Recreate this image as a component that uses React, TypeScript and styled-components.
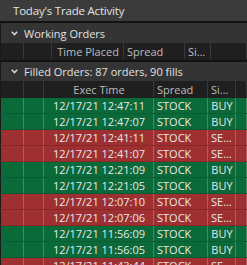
import React from 'react';
import styled, { createGlobalStyle } from 'styled-components';

const GlobalStyle = createGlobalStyle`
    html, body {
        margin: 0;
        padding: 0;
        background: #2b2b2b;
    }
    * {
        box-sizing: border-box;
    }
`;

const Panel = styled.div`
    width: 247px;
    height: 265px;
    overflow: hidden;
    background-color: #262626;
    font-family: "Open Sans", "Noto Sans", sans-serif;
    color: #dcdcdc;
`;
const TitleBar = styled.div`
    height: 23px;
    padding: 0 13px;
    display: flex;
    align-items: center;
    font-size: 11.5px;
    letter-spacing: -0.2px;
    color: #e2e2e2;
    background-color: #3b3b3b;
    border-bottom: 2px solid #121212;
`;
const SectionHeader = styled.div<{ height: number }>`
    height: ${(p) => p.height}px;
    display: flex;
    align-items: center;
    gap: 6px;
    padding-left: 10px;
    font-size: 11px;
    color: #e0e0e0;
    background-color: #343434;
    border-left: 1px solid #1a1a1a;
`;
const Chevron = styled.svg`
    width: 7px;
    height: 5px;
    flex: none;
`;
const Grid = styled.div<{ cols: string; bg: string; line: string; rowLine: string; height: number }>`
    display: grid;
    grid-template-columns: ${(p) => p.cols};
    height: ${(p) => p.height}px;
    background-color: ${(p) => p.bg};
    border-left: 1px solid #1a1a1a;
    border-bottom: 1px solid ${(p) => p.rowLine};
    & > div {
        border-right: 1px solid ${(p) => p.line};
    }
`;
const Cell = styled.div<{ align?: string }>`
    display: flex;
    align-items: center;
    justify-content: ${(p) => p.align || 'flex-start'};
    padding: 0 2px 0 3px;
    font-size: 11px;
    white-space: nowrap;
    overflow: hidden;
    color: #e8e8e8;
`;
const HeadCell = styled(Cell)`
    color: #bdbdbd;
`;
const Separator = styled.div`
    height: 2px;
    background-color: #121212;
`;

const WORKING_COLS = '23px 28px 72px 61px 26px 1fr';
const FILLED_COLS = '23px 20px 110px 54px 28px 1fr';

const fills = [
    { time: '12:47:11', side: 'BUY' },
    { time: '12:47:07', side: 'BUY' },
    { time: '12:41:11', side: 'SELL' },
    { time: '12:41:07', side: 'SELL' },
    { time: '12:21:09', side: 'BUY' },
    { time: '12:21:05', side: 'BUY' },
    { time: '12:07:10', side: 'SELL' },
    { time: '12:07:06', side: 'SELL' },
    { time: '11:56:09', side: 'BUY' },
    { time: '11:56:05', side: 'BUY' },
    { time: '11:43:44', side: 'SELL' },
];

const Down = () => (
    <Chevron viewBox="0 0 7 5">
        <path d="M0.8 0.8 L3.5 3.6 L6.2 0.8" fill="none" stroke="#d8d8d8" strokeWidth="1.5" />
    </Chevron>
);

const App = () => {
    return <Panel>
        <GlobalStyle />
        <TitleBar>Today's Trade Activity</TitleBar>
        <SectionHeader height={20}><Down />Working Orders</SectionHeader>
        <Grid cols={WORKING_COLS} bg="#1f1f1f" line="#3a3a3a" rowLine="#1f1f1f" height={17}>
            <HeadCell />
            <HeadCell />
            <HeadCell align="center">Time Placed</HeadCell>
            <HeadCell>Spread</HeadCell>
            <HeadCell>Si…</HeadCell>
            <HeadCell />
        </Grid>
        <Separator />
        <SectionHeader height={19}><Down />Filled Orders: 87 orders, 90 fills</SectionHeader>
        <Grid cols={FILLED_COLS} bg="#1f1f1f" line="#3a3a3a" rowLine="#1f1f1f" height={17}>
            <HeadCell />
            <HeadCell />
            <HeadCell align="center">Exec Time</HeadCell>
            <HeadCell>Spread</HeadCell>
            <HeadCell>Si…</HeadCell>
            <HeadCell />
        </Grid>
        {fills.map((f, i) => {
            const buy = f.side === 'BUY';
            return <Grid key={i} cols={FILLED_COLS} height={16}
                bg={buy ? '#0b6a3a' : '#9e3032'}
                line={buy ? '#3f8a60' : '#b9595a'}
                rowLine={buy ? '#0a5a32' : '#8a2628'}>
                <Cell />
                <Cell />
                <Cell align="center">12/17/21 {f.time}</Cell>
                <Cell>STOCK</Cell>
                <Cell align={buy ? 'center' : 'flex-start'}>{buy ? 'BUY' : 'SE…'}</Cell>
                <Cell />
            </Grid>;
        })}
    </Panel>;
}

export default App;
